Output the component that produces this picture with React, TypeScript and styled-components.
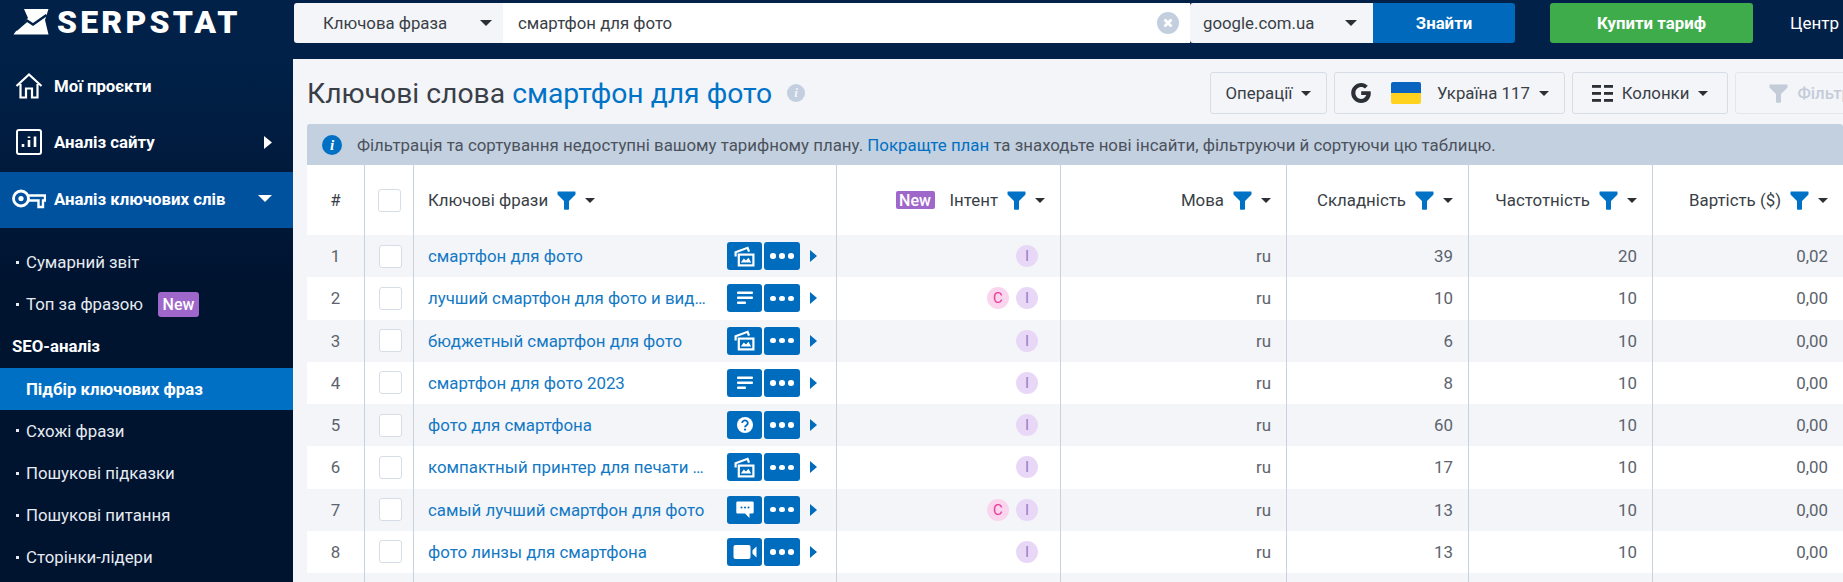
import React from 'react';
import styled, { createGlobalStyle } from 'styled-components';

const GlobalStyle = createGlobalStyle`
    html, body {
        margin: 0;
        overflow: hidden;
        background: #f3f5f9;
        font-family: Roboto, "Noto Sans", sans-serif;
    }
    * {
        box-sizing: border-box;
    }
`;

type ActionKind = 'images' | 'lines' | 'question' | 'chat' | 'video';

interface Keyword {
    phrase: string;
    action: ActionKind;
    commercial?: boolean;
    difficulty: number;
    volume: number;
    cost: string;
}

const keywords: Keyword[] = [
    { phrase: 'смартфон для фото', action: 'images', difficulty: 39, volume: 20, cost: '0,02' },
    { phrase: 'лучший смартфон для фото и видео', action: 'lines', commercial: true, difficulty: 10, volume: 10, cost: '0,00' },
    { phrase: 'бюджетный смартфон для фото', action: 'images', difficulty: 6, volume: 10, cost: '0,00' },
    { phrase: 'смартфон для фото 2023', action: 'lines', difficulty: 8, volume: 10, cost: '0,00' },
    { phrase: 'фото для смартфона', action: 'question', difficulty: 60, volume: 10, cost: '0,00' },
    { phrase: 'компактный принтер для печати фото', action: 'images', difficulty: 17, volume: 10, cost: '0,00' },
    { phrase: 'самый лучший смартфон для фото', action: 'chat', commercial: true, difficulty: 13, volume: 10, cost: '0,00' },
    { phrase: 'фото линзы для смартфона', action: 'video', difficulty: 13, volume: 10, cost: '0,00' },
];

const FunnelIcon = ({ color = '#0072c6' }: { color?: string }) => (
    <svg width="19" height="19" viewBox="0 0 19 19" style={{ flexShrink: 0 }}>
        <path d="M1 0.5H18A.5.5 0 0 1 18.5 1V3.6L12 10V18a.8.8 0 0 1-.8.8H7.8A.8.8 0 0 1 7 18V10L0.5 3.6V1A.5.5 0 0 1 1 0.5Z" fill={color} />
    </svg>
);

const ActionIcon = ({ kind }: { kind: ActionKind }) => {
    if (kind === 'lines') {
        return (
            <svg width="18" height="16" viewBox="0 0 18 16" fill="#fff">
                <rect x="1" y="1.5" width="16" height="2.6" rx="1" />
                <rect x="1" y="6.5" width="16" height="2.6" rx="1" />
                <rect x="1" y="11.5" width="9" height="2.6" rx="1" />
            </svg>
        );
    }
    if (kind === 'question') {
        return (
            <svg width="18" height="18" viewBox="0 0 18 18">
                <circle cx="9" cy="9" r="8" fill="#fff" />
                <path d="M6.2 7a2.8 2.6 0 1 1 4.3 2.2C9.5 9.9 9 10.3 9 11.2" fill="none" stroke="#0069bb" strokeWidth="1.8" />
                <circle cx="9" cy="13.6" r="1.1" fill="#0069bb" />
            </svg>
        );
    }
    if (kind === 'chat') {
        return (
            <svg width="20" height="20" viewBox="0 0 20 20">
                <path d="M2.5 1.5H17.5A1.2 1.2 0 0 1 18.7 2.7V12.3A1.2 1.2 0 0 1 17.5 13.5H14.5V18L10 13.5H2.5A1.2 1.2 0 0 1 1.3 12.3V2.7A1.2 1.2 0 0 1 2.5 1.5Z" fill="#fff" />
                <circle cx="6.5" cy="7.5" r="1" fill="#0069bb" />
                <circle cx="10" cy="7.5" r="1" fill="#0069bb" />
                <circle cx="13.5" cy="7.5" r="1" fill="#0069bb" />
            </svg>
        );
    }
    if (kind === 'video') {
        return (
            <svg width="24" height="16" viewBox="0 0 24 16" fill="#fff">
                <rect x="0.5" y="1" width="17" height="14" rx="2" />
                <path d="M19.5 6.2L23.5 2.5V13.5L19.5 9.8Z" />
            </svg>
        );
    }
    return (
        <svg width="21" height="21" viewBox="0 0 21 21" fill="none" stroke="#fff">
            <rect x="4.8" y="8.6" width="14.6" height="10.8" strokeWidth="2.2" />
            <path d="M1.6 10.4V6.2L13.6 1.8L15 5.6" strokeWidth="2.2" />
            <path d="M6.8 16.6L9.8 12.6L12 14.4L14.4 11.8L17.2 16.6Z" fill="#fff" stroke="none" />
        </svg>
    );
};

export default function App() {
    const renderLogo = (
        <Logo>
            <svg width="36" height="26" viewBox="0 0 36 26">
                <path d="M11 0H35.5L32 11L35.5 25.5H0.5L6 18L15 9Z" fill="#fff" />
                <path d="M3 21L14 11.5L20 15.5L33.5 6" fill="none" stroke="#012148" strokeWidth="2.4" />
            </svg>
            <LogoText>SERPSTAT</LogoText>
        </Logo>
    );

    const renderSearch = (
        <SearchGroup>
            <SearchSelect $width={209} $paddingLeft={29} $gap={33}>
                Ключова фраза <Caret $size={6} />
            </SearchSelect>
            <SearchInput>
                смартфон для фото
                <ClearButton>
                    <svg width="10" height="10" viewBox="0 0 10 10">
                        <path d="M1.5 1.5L8.5 8.5M8.5 1.5L1.5 8.5" stroke="#fff" strokeWidth="2.8" />
                    </svg>
                </ClearButton>
            </SearchInput>
            <SearchSelect $width={183} $paddingLeft={13} $gap={31}>
                google.com.ua <Caret $size={6} />
            </SearchSelect>
            <SearchButton>Знайти</SearchButton>
        </SearchGroup>
    );

    const renderSidebar = (
        <Sidebar>
            <MenuItem>
                <MenuIcon>
                    <svg width="28" height="26" viewBox="0 0 28 26" fill="none" stroke="#fff" strokeWidth="2.2">
                        <path d="M1.5 13L14 1.5L26.5 13M5.5 11V24.5H11V15.5H17V24.5H22.5V11" />
                    </svg>
                </MenuIcon>
                Мої проєкти
            </MenuItem>
            <MenuItem>
                <MenuIcon>
                    <svg width="26" height="26" viewBox="0 0 26 26" fill="none" stroke="#fff">
                        <rect x="1" y="1" width="24" height="24" rx="2" strokeWidth="2" />
                        <path d="M7 18V15M13 18V11M13 9V7.5M19 18V7.5" strokeWidth="2.6" />
                    </svg>
                </MenuIcon>
                Аналіз сайту
                <MenuArrow>
                    <svg width="8" height="13" viewBox="0 0 8 13">
                        <path d="M0 0L8 6.5L0 13Z" fill="#fff" />
                    </svg>
                </MenuArrow>
            </MenuItem>
            <MenuItem $active>
                <MenuIcon>
                    <svg width="34" height="20" viewBox="0 0 34 20" fill="none" stroke="#fff">
                        <circle cx="9" cy="9.5" r="7.5" strokeWidth="2.8" />
                        <circle cx="9" cy="9.5" r="2.6" fill="#fff" stroke="none" />
                        <path d="M16.5 6.5H33V11.5H31V18H26.5V11.5H16.5" strokeWidth="2.4" />
                    </svg>
                </MenuIcon>
                Аналіз ключових слів
                <MenuArrow>
                    <Caret $size={7} $color="#fff" />
                </MenuArrow>
            </MenuItem>
            <SubMenu>
                <SubItem>
                    <Dot />
                    Сумарний звіт
                </SubItem>
                <SubItem>
                    <Dot />
                    Топ за фразою
                    <NewTag>New</NewTag>
                </SubItem>
                <SubSection>SEO-аналіз</SubSection>
                <SubItem $selected>Підбір ключових фраз</SubItem>
                <SubItem>
                    <Dot />
                    Схожі фрази
                </SubItem>
                <SubItem>
                    <Dot />
                    Пошукові підказки
                </SubItem>
                <SubItem>
                    <Dot />
                    Пошукові питання
                </SubItem>
                <SubItem>
                    <Dot />
                    Сторінки-лідери
                </SubItem>
            </SubMenu>
        </Sidebar>
    );

    const renderToolbar = (
        <Toolbar>
            <ToolButton $width={117}>
                Операції <Caret $size={5} />
            </ToolButton>
            <ToolButton $width={231}>
                <svg width="22" height="22" viewBox="0 0 22 22">
                    <path d="M20.5 9.2H11.2V13H16.3C15.6 15.4 13.6 16.9 11.2 16.9C8 16.9 5.4 14.3 5.4 11C5.4 7.7 8 5.1 11.2 5.1C12.7 5.1 14 5.7 15 6.6L17.8 3.8C16.1 2.1 13.8 1 11.2 1C5.7 1 1.2 5.5 1.2 11C1.2 16.5 5.7 21 11.2 21C16.7 21 20.8 17 20.8 11C20.8 10.4 20.7 9.8 20.5 9.2Z" fill="#2b2f36" />
                </svg>
                <Flag />
                Україна 117 <Caret $size={5} />
            </ToolButton>
            <ToolButton $width={156}>
                <svg width="21" height="18" viewBox="0 0 21 18" fill="#2b2f36">
                    <rect x="0" y="1" width="9" height="2.8" />
                    <rect x="12" y="1" width="9" height="2.8" />
                    <rect x="0" y="8" width="9" height="2.8" />
                    <rect x="12" y="8" width="9" height="2.8" />
                    <rect x="0" y="15" width="9" height="2.8" />
                    <rect x="12" y="15" width="9" height="2.8" />
                </svg>
                Колонки <Caret $size={5} />
            </ToolButton>
            <ToolButton $width={160} $disabled>
                <FunnelIcon color="#c3ccd8" />
                Фільтри
            </ToolButton>
        </Toolbar>
    );

    const renderTableHeader = (
        <HeaderRow>
            <HeaderCell $center>#</HeaderCell>
            <HeaderCell $center>
                <CheckBox />
            </HeaderCell>
            <HeaderCell $left>
                Ключові фрази <FunnelIcon /> <Caret $size={5} />
            </HeaderCell>
            <HeaderCell>
                <HeaderTag>New</HeaderTag>
                Інтент <FunnelIcon /> <Caret $size={5} />
            </HeaderCell>
            <HeaderCell>
                Мова <FunnelIcon /> <Caret $size={5} />
            </HeaderCell>
            <HeaderCell>
                Складність <FunnelIcon /> <Caret $size={5} />
            </HeaderCell>
            <HeaderCell>
                Частотність <FunnelIcon /> <Caret $size={5} />
            </HeaderCell>
            <HeaderCell>
                Вартість ($) <FunnelIcon /> <Caret $size={5} />
            </HeaderCell>
        </HeaderRow>
    );

    const renderRows = keywords.map((k, i) => (
        <Row key={k.phrase} $odd={i % 2 === 0}>
            <NumberCell>{i + 1}</NumberCell>
            <Cell $center>
                <CheckBox />
            </Cell>
            <KeywordCell>
                <KeywordLink>{k.phrase}</KeywordLink>
                <ActionButton $width={35}>
                    <ActionIcon kind={k.action} />
                </ActionButton>
                <ActionButton $width={36}>
                    <Dots>
                        <i />
                        <i />
                        <i />
                    </Dots>
                </ActionButton>
                <RowArrow />
            </KeywordCell>
            <Cell>
                {k.commercial && <IntentBadge $kind="c">C</IntentBadge>}
                <IntentBadge $kind="i">I</IntentBadge>
            </Cell>
            <Cell>ru</Cell>
            <Cell>{k.difficulty}</Cell>
            <Cell>{k.volume}</Cell>
            <Cell>{k.cost}</Cell>
        </Row>
    ));

    return (
        <Page>
            <GlobalStyle />
            <TopBar>
                {renderLogo}
                {renderSearch}
                <BuyButton>Купити тариф</BuyButton>
                <HelpLink>Центр</HelpLink>
            </TopBar>
            <Body>
                {renderSidebar}
                <Content>
                    <TitleRow>
                        <Title>
                            Ключові слова <TitleAccent>смартфон для фото</TitleAccent>
                            <TitleInfo>i</TitleInfo>
                        </Title>
                        {renderToolbar}
                    </TitleRow>
                    <Notice>
                        <NoticeIcon>i</NoticeIcon>
                        <span>
                            Фільтрація та сортування недоступні вашому тарифному плану.{' '}
                            <NoticeLink>Покращте план</NoticeLink> та знаходьте нові інсайти, фільтруючи й сортуючи цю таблицю.
                        </span>
                    </Notice>
                    <Table>
                        {renderTableHeader}
                        {renderRows}
                        <Row $odd>
                            <Cell />
                            <Cell />
                            <Cell />
                            <Cell />
                            <Cell />
                            <Cell />
                            <Cell />
                            <Cell />
                        </Row>
                    </Table>
                </Content>
            </Body>
        </Page>
    );
}

const Page = styled.div`
    width: 1843px;
    height: 582px;
    overflow: hidden;
    display: flex;
    flex-direction: column;
`;

const TopBar = styled.header`
    height: 59px;
    flex-shrink: 0;
    display: flex;
    background: #012148;
    padding-top: 3px;
`;

const Logo = styled.div`
    width: 294px;
    height: 40px;
    padding: 6px 0 0 13px;
    display: flex;
    align-items: flex-start;
    gap: 8px;
`;

const LogoText = styled.span`
    color: #fff;
    font-size: 32px;
    line-height: 26px;
    font-weight: 900;
    letter-spacing: 3.2px;
`;

const SearchGroup = styled.div`
    display: flex;
    height: 40px;
    font-size: 16.8px;
    color: #3a3f47;
`;

const SearchSelect = styled.div<{ $width: number; $paddingLeft: number; $gap: number }>`
    width: ${(p) => p.$width}px;
    padding-left: ${(p) => p.$paddingLeft}px;
    display: flex;
    align-items: center;
    gap: ${(p) => p.$gap}px;
    background: #f3f5f9;
    border-radius: 3px 0 0 3px;
`;

const SearchInput = styled.div`
    width: 687px;
    padding: 0 11px 0 15px;
    display: flex;
    align-items: center;
    justify-content: space-between;
    background: #fff;
`;

const ClearButton = styled.span`
    width: 22px;
    height: 22px;
    border-radius: 50%;
    background: #c3cfdf;
    display: flex;
    align-items: center;
    justify-content: center;
`;

const SearchButton = styled.button`
    width: 142px;
    border: 0;
    padding: 0;
    background: #0069bb;
    color: #fff;
    font: 700 16.8px Roboto, sans-serif;
    border-radius: 0 3px 3px 0;
`;

const BuyButton = styled.button`
    width: 203px;
    height: 40px;
    margin-left: 35px;
    border: 0;
    padding: 0;
    border-radius: 3px;
    background: #3fac4c;
    color: #fff;
    font: 700 16.8px Roboto, sans-serif;
`;

const HelpLink = styled.a`
    margin-left: 37px;
    height: 40px;
    line-height: 40px;
    color: #fff;
    font-size: 17px;
    white-space: nowrap;
`;

const Body = styled.div`
    flex: 1;
    min-height: 0;
    display: flex;
`;

const Sidebar = styled.nav`
    width: 293px;
    flex-shrink: 0;
    background: linear-gradient(#012148, #00132f 45%);
    color: #fff;
`;

const MenuItem = styled.div<{ $active?: boolean }>`
    height: ${(p) => (p.$active ? 56 : 56.5)}px;
    padding-bottom: 3px;
    display: flex;
    align-items: center;
    font-size: 16.8px;
    font-weight: 700;
    background: ${(p) => (p.$active ? '#00529f' : 'transparent')};
`;

const MenuIcon = styled.span`
    width: 54px;
    padding: 0 8px 0 12px;
    display: flex;
    justify-content: center;
`;

const MenuArrow = styled.span`
    margin-left: auto;
    margin-right: 21px;
    display: flex;
`;

const SubMenu = styled.div`
    padding-top: 13px;
`;

const SubItem = styled.div<{ $selected?: boolean }>`
    height: 42.2px;
    display: flex;
    align-items: center;
    padding-left: ${(p) => (p.$selected ? 26 : 16)}px;
    font-size: 16.8px;
    font-weight: ${(p) => (p.$selected ? 700 : 400)};
    color: ${(p) => (p.$selected ? '#fff' : '#e6ebf2')};
    background: ${(p) => (p.$selected ? '#0070c4' : 'transparent')};
`;

const SubSection = styled.div`
    height: 42.2px;
    display: flex;
    align-items: center;
    padding-left: 12px;
    font-size: 16.8px;
    font-weight: 700;
`;

const Dot = styled.span`
    width: 3px;
    height: 3px;
    margin-right: 7px;
    background: #e6ebf2;
`;

const NewTag = styled.span`
    margin-left: 15px;
    width: 41px;
    height: 25px;
    display: flex;
    align-items: center;
    justify-content: center;
    border-radius: 3px;
    background: #9f67c9;
    color: #fff;
    font-size: 16px;
    font-weight: 500;
`;

const Content = styled.main`
    flex: 1;
    min-width: 0;
    padding-left: 14px;
    overflow: hidden;
`;

const TitleRow = styled.div`
    height: 65px;
    display: flex;
    align-items: center;
    padding-top: 3px;
`;

const Title = styled.h1`
    flex: 0 0 903px;
    margin: 0;
    display: flex;
    align-items: center;
    white-space: pre;
    font-size: 28.3px;
    font-weight: 400;
    color: #3a3f47;
`;

const TitleAccent = styled.span`
    color: #0073c7;
`;

const TitleInfo = styled.span`
    margin-left: 15px;
    width: 18px;
    height: 18px;
    border-radius: 50%;
    background: #c3cfdf;
    color: #f3f5f9;
    font: italic 700 13px/18px "Liberation Serif", serif;
    text-align: center;
`;

const Toolbar = styled.div`
    display: flex;
    gap: 7px;
`;

const ToolButton = styled.div<{ $width: number; $disabled?: boolean }>`
    flex: 0 0 ${(p) => p.$width}px;
    height: 42px;
    display: flex;
    align-items: center;
    justify-content: center;
    gap: 9px;
    border: 1px solid ${(p) => (p.$disabled ? '#e2e7ee' : '#d6dde7')};
    border-radius: 3px;
    font-size: 16.8px;
    font-weight: ${(p) => (p.$disabled ? 500 : 400)};
    color: ${(p) => (p.$disabled ? '#c3ccd8' : '#3a3f47')};
    white-space: nowrap;
`;

const Flag = styled.span`
    width: 30px;
    height: 22px;
    margin: 0 7px 0 10px;
    border-radius: 2px;
    background: linear-gradient(#0b63c0 50%, #ffd21f 50%);
`;

const Caret = styled.span<{ $size: number; $color?: string }>`
    display: inline-block;
    flex-shrink: 0;
    width: 0;
    height: 0;
    border-left: ${(p) => p.$size}px solid transparent;
    border-right: ${(p) => p.$size}px solid transparent;
    border-top: ${(p) => p.$size}px solid ${(p) => p.$color || '#2b2f36'};
`;

const Notice = styled.div`
    height: 41px;
    display: flex;
    align-items: center;
    padding-left: 15px;
    gap: 15px;
    background: #c3d0e0;
    border-radius: 3px 3px 0 0;
    font-size: 16.85px;
    color: #4b525c;
    white-space: nowrap;
`;

const NoticeIcon = styled.span`
    width: 20px;
    height: 20px;
    border-radius: 50%;
    background: #0070c4;
    color: #fff;
    font: italic 700 15px/20px "Liberation Serif", serif;
    text-align: center;
`;

const NoticeLink = styled.a`
    color: #0070c4;
`;

const Table = styled.div`
    width: 1536px;
    background: #fff;
`;

const columns = '57px 49px 423px 224px 226px 182px 184px 191px';

const HeaderRow = styled.div`
    height: 70px;
    display: grid;
    grid-template-columns: ${columns};
`;

const HeaderCell = styled.div<{ $center?: boolean; $left?: boolean }>`
    display: flex;
    align-items: center;
    gap: 9px;
    justify-content: ${(p) => (p.$center ? 'center' : p.$left ? 'flex-start' : 'flex-end')};
    padding: ${(p) => (p.$center ? '0' : p.$left ? '0 0 0 14px' : '0 15px 0 0')};
    font-size: 16.85px;
    color: #3a3f47;
    white-space: nowrap;

    &:not(:first-child) {
        border-left: 1px solid #c8d2de;
    }
`;

const HeaderTag = styled.span`
    width: 39px;
    height: 18px;
    margin-right: 6px;
    display: flex;
    align-items: center;
    justify-content: center;
    border-radius: 2px;
    background: #9f67c9;
    color: #fff;
    font-size: 16px;
    font-weight: 500;
`;

const Row = styled.div<{ $odd?: boolean }>`
    height: 42.25px;
    display: grid;
    grid-template-columns: ${columns};
    background: ${(p) => (p.$odd ? '#f3f5f9' : '#fff')};
`;

const Cell = styled.div<{ $center?: boolean }>`
    display: flex;
    align-items: center;
    justify-content: ${(p) => (p.$center ? 'center' : 'flex-end')};
    gap: 7px;
    padding: ${(p) => (p.$center ? '0 0 0 3px' : '0 15px 0 0')};
    font-size: 16.85px;
    color: #5c636d;

    &:not(:first-child) {
        border-left: 1px solid #c8d2de;
    }
`;

const NumberCell = styled.div`
    display: flex;
    align-items: center;
    justify-content: center;
    font-size: 16.85px;
    color: #5c636d;
`;

const KeywordCell = styled(Cell)`
    justify-content: flex-start;
    gap: 2px;
    padding: 0 0 0 14px;
`;

const KeywordLink = styled.a`
    width: 297px;
    padding-right: 17px;
    overflow: hidden;
    white-space: nowrap;
    text-overflow: ellipsis;
    font-size: 16.85px;
    color: #1379c4;
`;

const CheckBox = styled.span`
    width: 23px;
    height: 23px;
    background: #fff;
    border: 1px solid #d6dde7;
    border-radius: 3px;
`;

const ActionButton = styled.span<{ $width: number }>`
    width: ${(p) => p.$width}px;
    height: 28px;
    display: flex;
    align-items: center;
    justify-content: center;
    background: #006cbd;
    border-radius: 3px;
`;

const Dots = styled.span`
    display: flex;
    gap: 3.5px;

    i {
        width: 5.5px;
        height: 5.5px;
        border-radius: 50%;
        background: #fff;
    }
`;

const RowArrow = styled.span`
    margin-left: 8px;
    border-top: 6px solid transparent;
    border-bottom: 6px solid transparent;
    border-left: 7px solid #006cbd;
`;

const IntentBadge = styled.span<{ $kind: 'c' | 'i' }>`
    width: 22px;
    height: 22px;
    margin-right: 7px;
    margin-left: ${(p) => (p.$kind === 'c' ? 0 : -7)}px;
    display: flex;
    align-items: center;
    justify-content: center;
    border-radius: 50%;
    font-size: 15px;
    background: ${(p) => (p.$kind === 'c' ? '#fbd5ee' : '#e8d7f7')};
    color: ${(p) => (p.$kind === 'c' ? '#e43c9c' : '#9a7cc4')};
`;
